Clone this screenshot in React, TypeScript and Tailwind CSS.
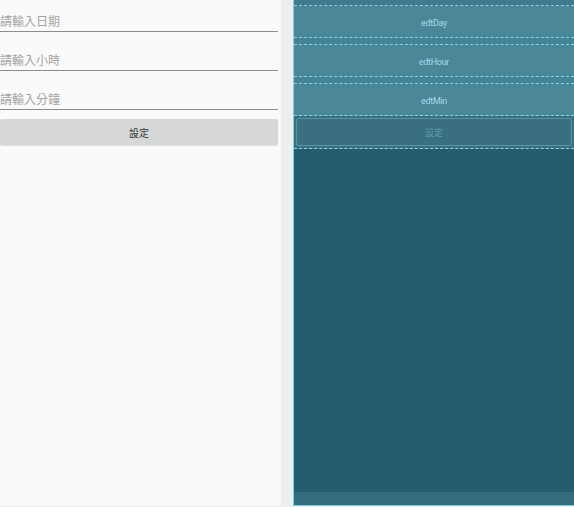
import React from "react";

const cjk = { fontFamily: '"Noto Sans CJK TC", "Noto Sans", sans-serif' };

function Field({ hint }: { hint: string }) {
  return (
    <div className="h-[39px] flex flex-col justify-end">
      <div className="h-[16px] leading-[16px] mb-[2px] text-[12px] text-[#a3a3a3]" style={cjk}>
        {hint}
      </div>
      <div className="h-[1px] bg-[#8c8c8c]" />
    </div>
  );
}

function BpField({ label }: { label: string }) {
  return (
    <div className="h-[32px] bg-[#4a8798] border-b border-dashed border-[#86d6ea] flex items-center justify-center pt-[5px]">
      <span className="text-[9px] tracking-[-0.3px] text-[#a6dbe8]" style={{ fontFamily: "Roboto, sans-serif" }}>
        {label}
      </span>
    </div>
  );
}

function BpGap() {
  return <div className="h-[7px] bg-[#468394] border-b border-dashed border-[#86d6ea]" />;
}

export default function App() {
  return (
    <div className="w-[574px] h-[507px] bg-[#eeeeee] flex overflow-hidden">
      <div className="w-[281px] h-[506px] bg-[#fafafa] flex flex-col">
        <div className="-mt-[7px] pr-[3px] flex flex-col">
          <Field hint="請輸入日期" />
          <Field hint="請輸入小時" />
          <Field hint="請輸入分鐘" />
          <div className="mt-[9px] h-[26px] bg-[#d6d7d7] rounded-[2px] shadow-[0_1px_1px_rgba(0,0,0,0.12)] flex items-center justify-center">
            <span className="text-[10px] text-[#333333]" style={cjk}>
              設定
            </span>
          </div>
        </div>
      </div>
      <div className="w-[12px] shrink-0" />
      <div className="flex-1 h-[506px] border-l border-b border-[#7fd0e6] flex flex-col bg-[#235c6c]">
        <div className="h-[6px] bg-[#3f7b8c] border-b border-dashed border-[#86d6ea]" />
        <BpField label="edtDay" />
        <BpGap />
        <BpField label="edtHour" />
        <BpGap />
        <BpField label="edtMin" />
        <div className="h-[33px] bg-[#3a6f80] border-b border-dashed border-[#86d6ea] p-[2px]">
          <div className="h-full border border-[#5a95a6] rounded-[2px] flex items-center justify-center pt-[2px]">
            <span className="text-[9px] text-[#5c9cad]" style={cjk}>
              設定
            </span>
          </div>
        </div>
        <div className="flex-1 bg-[#235c6c]" />
        <div className="h-[13px] bg-[#336c7d]" />
      </div>
    </div>
  );
}
